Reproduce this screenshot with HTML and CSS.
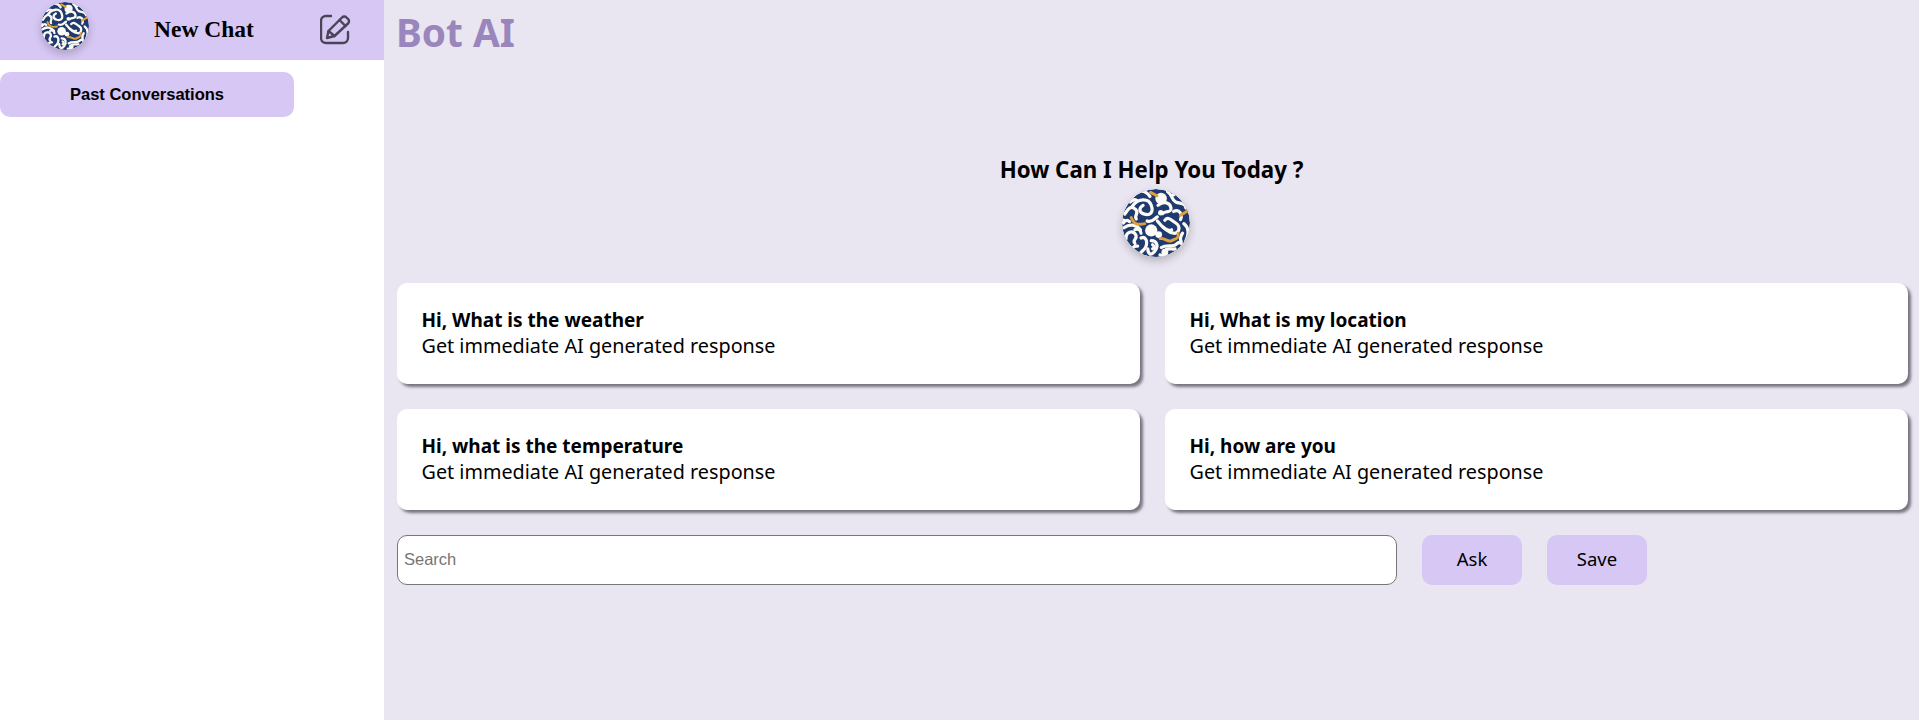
FILE: index.html
```html
<!DOCTYPE html>
<html lang="en">
<head>
<meta charset="utf-8">
<title>Bot AI</title>
<link rel="stylesheet" href="styles.css">
</head>
<body>
<svg class="defs" width="0" height="0" aria-hidden="true">
  <defs>
    <clipPath id="disc"><circle cx="0" cy="0" r="100"/></clipPath>
    <g id="brain" clip-path="url(#disc)">
      <circle cx="0" cy="0" r="100" fill="#1f3a6e"/>
      <g fill="none" stroke="#fbfaf5" stroke-width="9.500" stroke-linecap="round" stroke-linejoin="round">
        <path d="M-72-46C-54-74-22-74-14-52S-18-22-34-26-52-44-38-52"/>
        <path d="M-92-26C-80-46-72-52-60-40S-66-22-58-12"/>
        <path d="M-62-88C-44-98-28-94-18-78"/>
        <path d="M-96 0C-90-8-84-10-78-4"/>
        <path d="M-26-6C-12 0-6-12 4-18"/>
        <path d="M6-52C24-66 42-60 44-44S24-36 20-28"/>
        <path d="M34-92C52-80 44-68 58-62S86-60 88-44"/>
        <path d="M52-34C66-42 80-28 72-10"/>
        <path d="M4-6C20 14 36 28 52 30S74 10 58 0 36-20 26-8"/>
        <path d="M20 12C30 20 40 24 46 20"/>
        <path d="M82 2C96 12 98 34 88 52"/>
        <path d="M-94 14C-78 2-58 4-46 20"/>
        <path d="M-88 46C-90 26-68 20-60 34S-72 50-62 60"/>
        <path d="M-44 44C-30 38-24 54-30 70S-54 84-40 98"/>
        <path d="M-54 68C-68 66-74 76-64 88"/>
        <path d="M-14 52C4 52 8 70-4 84S-24 90-24 76"/>
        <path d="M-10 64C-4 68-4 74-10 76"/>
        <path d="M16 72C30 62 50 72 60 62S84 60 74 80 32 100 12 94"/>
        <path d="M30 78C40 74 48 78 56 76"/>
        <path d="M78 30C72 40 70 48 74 54"/>
        <path d="M-62 20C-54 14-44 22-44 30"/>
        <path d="M-76 -62C-70 -68-62 -70-56 -66"/>
      </g>
      <g fill="#fbfaf5">
        <circle cx="15" cy="-72" r="17"/>
        <circle cx="-14" cy="22" r="18"/>
        <circle cx="8" cy="34" r="10"/>
        <circle cx="26" cy="86" r="10"/>
        <circle cx="14" cy="-30" r="8"/>
        <circle cx="-96" cy="-6" r="7"/>
        <circle cx="52" cy="-84" r="6"/>
      </g>
      <g fill="none" stroke="#dfa13e" stroke-width="8.500" stroke-linecap="round" stroke-linejoin="round">
        <path d="M-73-16C-68-2-60 8-33 2"/>
        <path d="M12 46C26 42 34 58 46 52S68 46 65 30"/>
        <path d="M-16-90L3-80"/>
        <path d="M72-23L94-36"/>
      </g>
    </g>
  </defs>
</svg>
<div class="app">
  <aside class="sidebar">
    <header class="side-head">
      <svg class="logo logo-small" viewBox="-100 -100 200 200" role="img" aria-label="Bot logo"><use href="#brain"/></svg>
      <span class="new-chat">New Chat</span>
      <svg class="edit" viewBox="0 0 32 32" aria-hidden="true">
        <path d="M11 2H6a5 5 0 0 0-5 5v17a5 5 0 0 0 5 5h17a5 5 0 0 0 5-5v-6"/>
        <path d="M7 24l1.500-7L22 3.500a3 3 0 0 1 4.500 0l1.500 1.500a3 3 0 0 1 0 4.500L14.500 22z"/>
        <path d="M19.500 6l6 6M8.500 17l6 5"/>
      </svg>
    </header>
    <button class="past" type="button">Past Conversations</button>
  </aside>
  <main class="main">
    <h1 class="title">Bot AI</h1>
    <section class="hero">
      <h2 class="hero-text">How Can I Help You Today ?</h2>
      <svg class="logo logo-large" viewBox="-100 -100 200 200" role="img" aria-label="Bot logo"><use href="#brain"/></svg>
    </section>
    <section class="cards">
      <article class="card"><strong>Hi, What is the weather</strong><span>Get immediate AI generated response</span></article>
      <article class="card"><strong>Hi, What is my location</strong><span>Get immediate AI generated response</span></article>
      <article class="card"><strong>Hi, what is the temperature</strong><span>Get immediate AI generated response</span></article>
      <article class="card"><strong>Hi, how are you</strong><span>Get immediate AI generated response</span></article>
    </section>
    <form class="ask-row">
      <input class="search" type="text" placeholder="Search">
      <button class="action" type="button">Ask</button>
      <button class="action" type="button">Save</button>
    </form>
  </main>
</div>
</body>
</html>
```
FILE: styles.css
```css
* { box-sizing: border-box; }
html, body { margin: 0; height: 720px; overflow: hidden; background: #fff; }
.defs { display: block; height: 0; }
.app { display: flex; height: 720px; }
.sidebar { width: 384px; flex: none; background: #fff; }
.side-head {
  height: 60px; background: #d7c7f4;
  display: grid; grid-template-columns: 130px 150px 1fr; align-items: center;
}
.logo { display: block; border-radius: 50%; }
.logo-small { width: 48px; height: 48px; margin: -8px 0 0 41px; box-shadow: 0 4px 8px rgba(0,0,0,.2); }
.new-chat {
  font: bold 23.500px "Liberation Serif", serif; color: #000;
  text-align: center; margin: -2px 0 0 -2px;
}
.edit { width: 32px; height: 32px; margin-left: 40px; fill: none; stroke: #4a4456; stroke-width: 2.4; stroke-linejoin: round; stroke-linecap: round; }
.past {
  display: block; width: 294px; height: 45px; margin-top: 12px; border: 0; border-radius: 10px;
  background: #d7c7f4; color: #000; font: bold 16.5px "Liberation Sans", sans-serif;
}
.main { flex: 1; min-width: 0; background: #e9e6f1; padding: 0 13px 0 13px; }
.title {
  margin: 0 0 0 -1px; height: 154px; padding-top: 8px;
  font: bold 38.800px/48px "Noto Sans", sans-serif; color: #9a86bc;
}
.hero { display: flex; flex-direction: column; align-items: center; height: 129px; padding-top: 1px; }
.hero-text { margin: 0; font: bold 22.300px/30px "Noto Sans", sans-serif; color: #000; }
.logo-large { width: 68px; height: 68px; margin: 4px 0 0 9px; box-shadow: 0 4px 8px rgba(0,0,0,.22); }
.cards { display: grid; grid-template-columns: 743px 743px; gap: 25px; }
.card {
  height: 101px; padding: 24px 24.500px; background: #fff; border-radius: 10px;
  box-shadow: 3px 3px 3px #77757f;
  display: flex; flex-direction: column; color: #000;
  font: 19.800px/26px "Noto Sans", sans-serif;
}
.card strong { font-weight: 700; font-size: 19px; }
.ask-row { display: flex; gap: 25px; margin-top: 25px; }
.search {
  width: 1000px; height: 50px; padding: 0 6px 2px; border: 1px solid #767676; border-radius: 10px;
  background: #fff; font: 16.500px "Liberation Sans", sans-serif; outline: none;
}
.search::placeholder { color: #757575; }
.action {
  width: 100px; height: 50px; padding: 0 0 4px; border: 0; border-radius: 10px; background: #d7c7f4;
  color: #000; font: 18.500px "Noto Sans", sans-serif;
}
```
